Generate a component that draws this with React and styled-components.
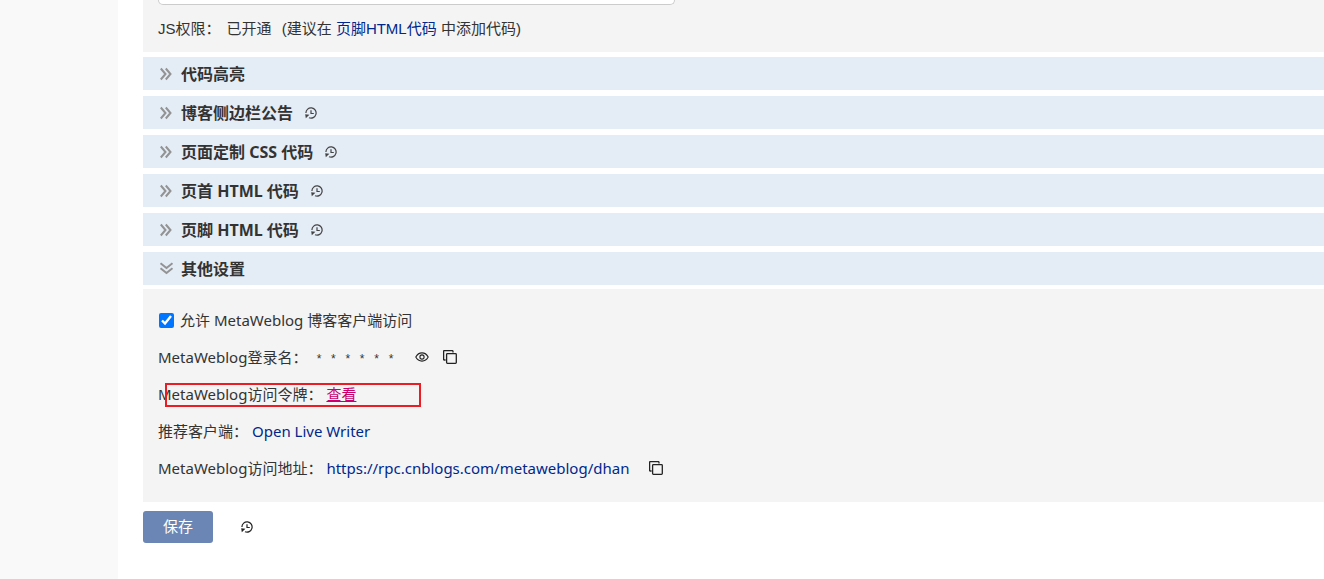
import React, { useState } from 'react';
import styled, { createGlobalStyle } from 'styled-components';

const GlobalStyle = createGlobalStyle`
  * {
    box-sizing: border-box;
  }
  body {
    margin: 0;
    background: #fff;
    color: #333;
    font-family: "Noto Sans", "Noto Sans CJK SC", sans-serif;
    font-size: 15px;
    line-height: 22px;
  }
`;

const Page = styled.div`
  display: flex;
  min-height: 100vh;
`;

const Sidebar = styled.aside`
  flex: 0 0 118px;
  background: #f9f9f9;
`;

const Main = styled.main`
  flex: 1;
  min-width: 0;
  padding-left: 25px;
`;

const Panel = styled.section`
  padding: ${(props) => (props.$top ? '0 15px 12px' : '20px 15px 23px')};
  background: #f4f4f4;
`;

const Announcement = styled.textarea`
  display: block;
  width: 100%;
  max-width: 517px;
  height: 5px;
  margin-bottom: 13px;
  padding: 0;
  border: 1px solid #ccc;
  border-top: 0;
  border-radius: 0 0 5px 5px;
  background: #fff;
  resize: none;
  overflow: hidden;
`;

const Permission = styled.p`
  margin: 0;
  font-family: "Liberation Sans", "Noto Sans CJK SC", sans-serif;
`;

const Status = styled.span`
  margin: 0 6px;
`;

const Link = styled.a`
  color: #00288c;
  text-decoration: none;
`;

const TokenLink = styled(Link)`
  color: #c7006e;
  text-decoration: underline;
`;

const Sections = styled.div`
  display: flex;
  flex-direction: column;
  gap: 6px;
  padding: 5px 0 4px;
`;

const SectionBar = styled.div`
  display: flex;
  align-items: center;
  gap: 12px;
  height: 33px;
  padding-left: 16px;
  background: #e4ecf6;
`;

const SectionToggle = styled.button`
  display: flex;
  align-items: center;
  gap: 8px;
  padding: 0;
  border: 0;
  background: none;
  color: #333;
  font: inherit;
  font-size: 16px;
  font-weight: 700;
  cursor: pointer;
`;

const IconButton = styled.button`
  display: inline-flex;
  align-items: center;
  justify-content: center;
  padding: 0;
  border: 0;
  background: none;
  color: ${(props) => props.$color || '#222'};
  cursor: pointer;
`;

const Fields = styled.div`
  display: flex;
  flex-direction: column;
  gap: 15px;
`;

const Row = styled.div`
  position: relative;
  display: flex;
  align-items: center;
  align-self: flex-start;
`;

const Checkbox = styled.input`
  width: 15px;
  height: 15px;
  margin: 0 6px 0 1px;
  accent-color: #0075ff;
`;

const Name = styled.span`
  margin-right: 4px;
`;

const Masked = styled.span`
  margin: 0 20px 0 4px;
  padding-top: 5px;
  font-family: "Liberation Mono", monospace;
  font-size: 12px;
  line-height: 16px;
`;

const RowIcons = styled.span`
  display: flex;
  align-items: center;
  gap: 14px;
  margin-left: ${(props) => (props.$spaced ? '20px' : '0')};
`;

// Red frame drawn over the token row
const Marker = styled.span`
  position: absolute;
  top: 0;
  left: 7px;
  width: 256px;
  height: 24px;
  border: 2px solid #ec1c24;
  pointer-events: none;
`;

const Actions = styled.div`
  display: flex;
  align-items: center;
  gap: 28px;
  padding: 9px 0;
`;

const SaveButton = styled.button`
  width: 70px;
  height: 32px;
  padding: 0 0 2px;
  border: 0;
  border-radius: 3px;
  background: #6b86b4;
  color: #fff;
  font: inherit;
  cursor: pointer;
`;

const Chevrons = ({ open }) => (
  <svg width="14" height="14" viewBox="0 0 14 14" fill="none" stroke="#939393" strokeWidth="2" aria-hidden="true">
    {open ? (
      <path d="M1.5 1.200L7.500 6l6-4.800M1.500 6.200L7.500 11l6-4.800" />
    ) : (
      <path d="M1.8 1.5L6.5 7l-4.7 5.5M6.8 1.5L11.5 7l-4.7 5.5" />
    )}
  </svg>
);

const HistoryIcon = () => (
  <svg width="12" height="12" viewBox="0 0 12 12" fill="none" stroke="currentColor" strokeWidth="1.2" aria-hidden="true">
    <path d="M.9 6A5.1 5.1 0 1 1 4 10.700" />
    <path d="M6 3.2v3.3h2.8" />
    <path d="M.2 7.200l4.200.6-3.600 3.400z" fill="currentColor" stroke="none" />
  </svg>
);

const EyeIcon = () => (
  <svg width="14" height="12" viewBox="0 0 14 12" fill="none" stroke="currentColor" strokeWidth="1.1" aria-hidden="true">
    <path d="M.8 6C2.300 3.200 4.400 1.900 7 1.900S11.700 3.200 13.200 6C11.700 8.800 9.600 10.100 7 10.100S2.300 8.800.8 6z" />
    <circle cx="7" cy="6" r="2.1" />
  </svg>
);

const CopyIcon = () => (
  <svg width="14" height="14" viewBox="0 0 14 14" fill="none" stroke="currentColor" strokeWidth="1.3" aria-hidden="true">
    <rect x="3.6" y="3.6" width="9.7" height="9.7" rx=".8" />
    <path d="M2.6 10H1.4a.8.8 0 0 1-.8-.8V1.4a.8.8 0 0 1 .8-.8h7.8a.8.8 0 0 1 .8.8v1.200" />
  </svg>
);

const sections = [
  { title: '代码高亮' },
  { title: '博客侧边栏公告', history: true },
  { title: '页面定制 CSS 代码', history: true },
  { title: '页首 HTML 代码', history: true },
  { title: '页脚 HTML 代码', history: true },
  { title: '其他设置' },
];

const App = () => {
  const [open, setOpen] = useState('其他设置');
  const [allowed, setAllowed] = useState(true);

  return (
    <>
      <GlobalStyle />
      <Page>
        <Sidebar />
        <Main>
          <Panel $top>
            <Announcement aria-label="博客侧边栏公告" />
            <Permission>
              JS权限：
              <Status>已开通</Status>
              {' '}(建议在 <Link href="#footer">页脚HTML代码</Link> 中添加代码)
            </Permission>
          </Panel>
          <Sections>
            {sections.map(({ title, history }) => (
              <SectionBar key={title}>
                <SectionToggle
                  type="button"
                  aria-expanded={open === title}
                  onClick={() => setOpen(open === title ? '' : title)}
                >
                  <Chevrons open={open === title} />
                  {title}
                </SectionToggle>
                {history && (
                  <IconButton type="button" aria-label="历史" $color="#444">
                    <HistoryIcon />
                  </IconButton>
                )}
              </SectionBar>
            ))}
          </Sections>
          {open === '其他设置' && (
            <Panel>
              <Fields>
                <Row>
                  <Checkbox
                    id="allow"
                    type="checkbox"
                    checked={allowed}
                    onChange={(e) => setAllowed(e.target.checked)}
                  />
                  <label htmlFor="allow">允许 MetaWeblog 博客客户端访问</label>
                </Row>
                <Row>
                  <Name>MetaWeblog登录名：</Name>
                  <Masked>* * * * * *</Masked>
                  <RowIcons>
                    <IconButton type="button" aria-label="显示">
                      <EyeIcon />
                    </IconButton>
                    <IconButton type="button" aria-label="复制">
                      <CopyIcon />
                    </IconButton>
                  </RowIcons>
                </Row>
                <Row>
                  <Name>MetaWeblog访问令牌：</Name>
                  <TokenLink href="#token">查看</TokenLink>
                  <Marker />
                </Row>
                <Row>
                  <Name>推荐客户端：</Name>
                  <Link href="#writer">Open Live Writer</Link>
                </Row>
                <Row>
                  <Name>MetaWeblog访问地址：</Name>
                  <Link href="#metaweblog">https://rpc.cnblogs.com/metaweblog/dhan</Link>
                  <RowIcons $spaced>
                    <IconButton type="button" aria-label="复制">
                      <CopyIcon />
                    </IconButton>
                  </RowIcons>
                </Row>
              </Fields>
            </Panel>
          )}
          <Actions>
            <SaveButton type="submit">保存</SaveButton>
            <IconButton type="button" aria-label="历史">
              <HistoryIcon />
            </IconButton>
          </Actions>
        </Main>
      </Page>
    </>
  );
};

export default App;
